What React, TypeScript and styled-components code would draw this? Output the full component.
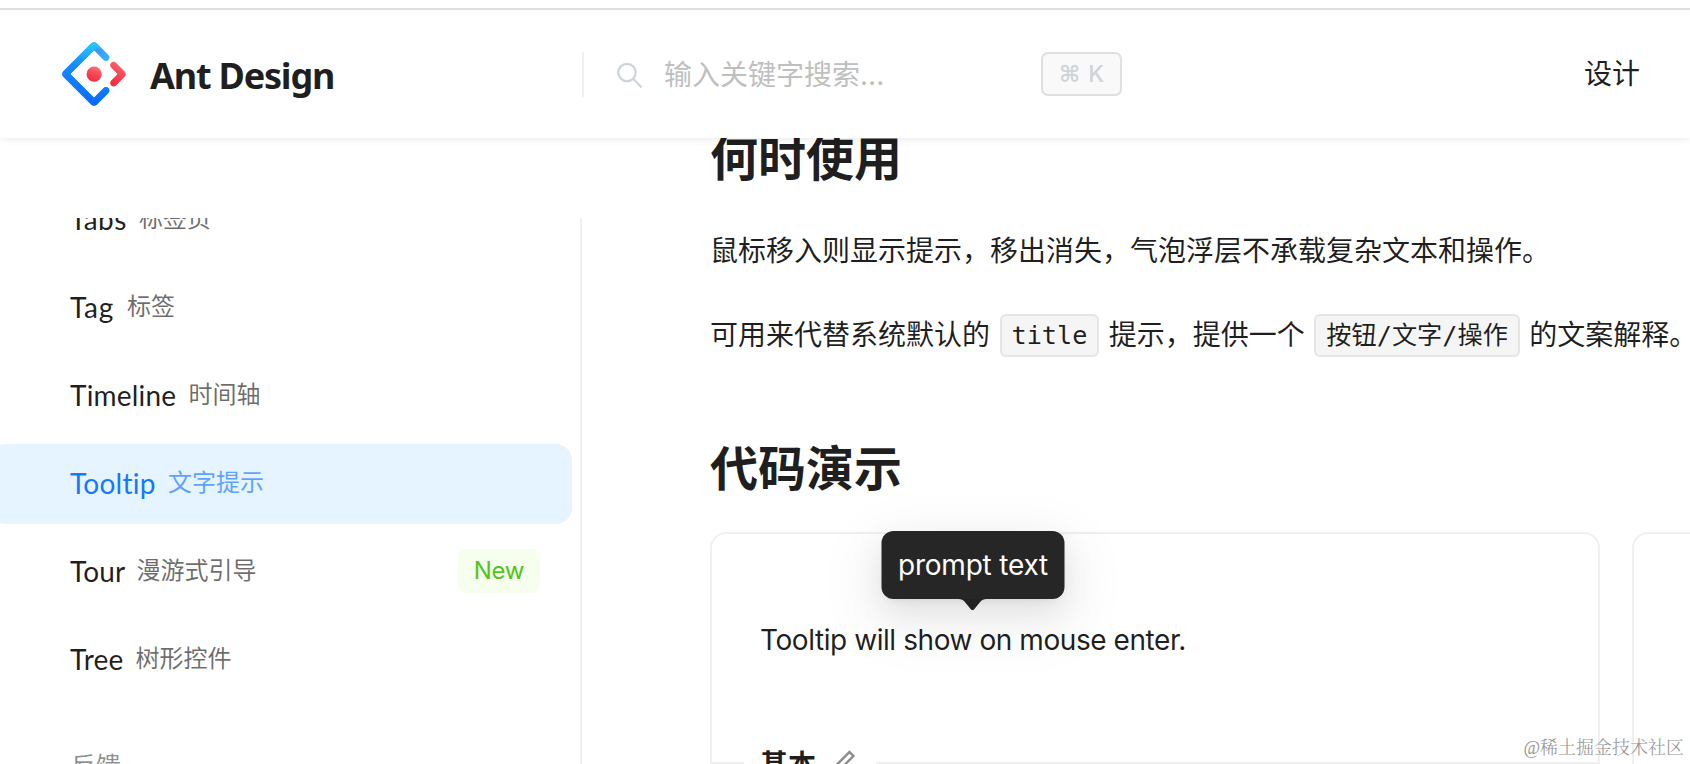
import React from 'react';
import styled, { createGlobalStyle } from 'styled-components';
import { AiOutlineEdit } from 'react-icons/ai';

const GlobalStyle = createGlobalStyle`
  * { box-sizing: border-box; }
  html, body { margin: 0; background: #fff; overflow: hidden; }
  body {
    font-family: Inter, 'Noto Sans CJK SC', sans-serif;
    font-size: 28px;
    color: rgba(0, 0, 0, 0.88);
  }
`;

const Page = styled.div`
  position: relative;
  display: flex;
  flex-direction: column;
  width: 1690px;
  height: 764px;
  overflow: hidden;
  background: #fff;
`;

const TopStrip = styled.div`
  flex: none;
  height: 10px;
  border-bottom: 2px solid #e0e0e0;
`;

const Header = styled.header`
  position: relative;
  z-index: 2;
  flex: none;
  display: flex;
  align-items: center;
  height: 128px;
  background: #fff;
  box-shadow: 0 2px 4px rgba(0, 0, 0, 0.03), 0 2px 12px -2px rgba(0, 0, 0, 0.03),
    0 4px 8px rgba(0, 0, 0, 0.02);
`;

const Brand = styled.a`
  display: flex;
  align-items: center;
  width: 582px;
  padding-left: 62px;
  gap: 24px;
`;

const BrandName = styled.span`
  font: 700 36px/48px 'Noto Sans', sans-serif;
  letter-spacing: -1.2px;
  white-space: nowrap;
  padding-top: 3px;
`;

const SearchBox = styled.div`
  display: flex;
  align-items: center;
  width: 540px;
  height: 45px;
  border-left: 2px solid #f0f0f0;
  padding-left: 32px;
`;

const SearchHint = styled.span`
  flex: 1;
  padding: 2px 0 0 21px;
  line-height: 44px;
  color: #bfbfbf;
`;

const Shortcut = styled.kbd`
  display: flex;
  align-items: center;
  justify-content: center;
  gap: 8px;
  width: 81px;
  height: 44px;
  border: 2px solid #dfdfdf;
  border-radius: 7px;
  background: #f9f9f9;
  color: #ced4d9;
  font: 500 23px/42px Inter, sans-serif;
`;

const CommandGlyph = styled.span`
  font: 700 23px/42px 'DejaVu Sans', sans-serif;
`;

const NavLink = styled.a`
  margin-left: auto;
  padding-right: 50px;
  line-height: 44px;
`;

const Body = styled.div`
  flex: 1;
  display: flex;
  min-height: 0;
`;

const Sidebar = styled.aside`
  width: 582px;
  margin-top: 80px;
  border-right: 2px solid #f0f0f0;
  overflow: hidden;
`;

const Menu = styled.nav`
  display: flex;
  flex-direction: column;
  gap: 8px;
  margin: -38px 8px 0 -10px;
`;

const MenuItem = styled.a<{ $active?: boolean }>`
  display: flex;
  align-items: center;
  height: 80px;
  padding: 0 32px 2px 80px;
  border-radius: 16px;
  background: ${(p) => (p.$active ? '#e6f4ff' : 'transparent')};
  color: ${(p) => (p.$active ? '#1677ff' : 'rgba(0, 0, 0, 0.88)')};
`;

const ItemName = styled.span<{ $width: number; $spacing: number }>`
  width: ${(p) => p.$width}px;
  font: 28px/78px Lato, sans-serif;
  font-variant-ligatures: none;
  letter-spacing: ${(p) => p.$spacing}px;
  white-space: nowrap;
`;

const ItemSubtitle = styled.span`
  margin-left: 12px;
  font-size: 24px;
  line-height: 76px;
  opacity: 0.65;
`;

const NewTag = styled.span`
  margin-left: auto;
  width: 82px;
  height: 44px;
  border-radius: 8px;
  background: #f6ffed;
  color: #52c41a;
  font-size: 24px;
  line-height: 44px;
  text-align: center;
  letter-spacing: -0.3px;
`;

const GroupTitle = styled.div`
  padding: 36px 0 0 81px;
  font-size: 25px;
  line-height: 44px;
  color: rgba(0, 0, 0, 0.45);
`;

const Main = styled.main`
  flex: 1;
  min-width: 0;
  padding-left: 128px;
`;

const Heading = styled.h2<{ $top: number }>`
  margin: ${(p) => p.$top}px 0 0;
  font-size: 48px;
  font-weight: 600;
  line-height: 64px;
`;

const Paragraph = styled.p<{ $top: number }>`
  margin: ${(p) => p.$top}px 0 0;
  height: 56px;
  line-height: 56px;
  white-space: nowrap;
`;

const Code = styled.code`
  display: inline-block;
  margin: -4px 9.5px 0;
  padding: 0 10px;
  height: 43px;
  border: 2px solid #e6e6e6;
  border-radius: 6px;
  background: #f5f5f5;
  font: 25.2px/39px 'DejaVu Sans Mono', 'Noto Sans CJK SC', monospace;
  vertical-align: middle;
`;

const Cards = styled.div`
  display: flex;
  gap: 32px;
  margin-top: 31px;
`;

const Card = styled.section`
  flex: none;
  width: 890px;
  border: 2px solid #f0f0f0;
  border-radius: 16px;
  height: 400px;
`;

const Demo = styled.div`
  height: 228px;
  padding: 84px 48px 0;
  line-height: 44px;
`;

const DemoTarget = styled.span`
  position: relative;
  display: inline-block;
  white-space: nowrap;
  letter-spacing: -0.43px;
`;

const Tooltip = styled.div`
  position: absolute;
  left: 50%;
  bottom: 63px;
  transform: translateX(-50%);
  width: 183px;
  height: 68px;
  border-radius: 12px;
  background: #262626;
  color: #fff;
  line-height: 68px;
  text-align: center;
  letter-spacing: -0.2px;
  box-shadow: 0 12px 32px rgba(0, 0, 0, 0.08), 0 6px 12px -8px rgba(0, 0, 0, 0.12),
    0 18px 56px 16px rgba(0, 0, 0, 0.05);
`;

const Arrow = styled.svg`
  position: absolute;
  left: 77px;
  top: 68px;
`;

const DemoDivider = styled.div`
  display: flex;
  align-items: center;
  height: 44px;
  margin-top: -21px;
  &::before { content: ''; width: 32px; height: 2px; background: #f0f0f0; }
  &::after { content: ''; flex: 1; height: 2px; background: #f0f0f0; }
`;

const DemoTitle = styled.div`
  display: flex;
  align-items: center;
  width: 132px;
  padding-left: 16px;
  gap: 12px;
  font-weight: 600;
  line-height: 44px;
  svg { color: rgba(0, 0, 0, 0.45); }
`;

const DemoName = styled.span`
  padding-top: 4px;
`;

const Watermark = styled.div`
  position: absolute;
  right: 6px;
  bottom: 3px;
  font: 300 18px/26px 'Liberation Serif', 'Noto Serif CJK SC', 'Noto Sans CJK SC', serif;
  color: #949494;
`;

const Logo = () => (
  <svg width="64" height="64" viewBox="0 0 200 200">
    <defs>
      <linearGradient id="tip" x1="62.1%" y1="0%" x2="108.2%" y2="37.86%">
        <stop stopColor="#4285EB" offset="0%" />
        <stop stopColor="#2EC7FF" offset="100%" />
      </linearGradient>
      <linearGradient id="blue" x1="69.64%" y1="0%" x2="54.04%" y2="108.46%">
        <stop stopColor="#29CDFF" offset="0%" />
        <stop stopColor="#148EFF" offset="37.86%" />
        <stop stopColor="#0A60FF" offset="100%" />
      </linearGradient>
      <linearGradient id="red" x1="69.69%" y1="-12.97%" x2="16.72%" y2="117.39%">
        <stop stopColor="#FA816E" offset="0%" />
        <stop stopColor="#F74A5C" offset="41.47%" />
        <stop stopColor="#F51D2C" offset="100%" />
      </linearGradient>
    </defs>
    <path
      fill="url(#tip)"
      d="M91.588 4.177L4.18 91.513c-4.699 4.695-4.699 12.279 0 16.974l87.408 87.336c4.7 4.696 12.29 4.696 16.989 0l36.648-36.618c4.209-4.205 4.209-11.023 0-15.228-4.208-4.205-11.031-4.205-15.24 0l-27.783 27.76c-1.17 1.17-2.945 1.17-4.114 0L28.286 101.993c-1.17-1.169-1.17-2.942 0-4.111l69.802-69.744c1.169-1.169 2.944-1.169 4.114 0l27.783 27.76c4.209 4.205 11.032 4.205 15.24 0 4.209-4.205 4.209-11.022 0-15.227L108.581 4.056c-4.719-4.594-12.312-4.557-16.993.12z"
    />
    <path
      fill="url(#blue)"
      d="M91.588 4.177L4.18 91.513c-4.699 4.695-4.699 12.279 0 16.974l87.408 87.336c4.7 4.696 12.29 4.696 16.989 0l36.648-36.618c4.209-4.205 4.209-11.023 0-15.228-4.208-4.205-11.031-4.205-15.24 0l-27.783 27.76c-1.17 1.17-2.945 1.17-4.114 0L28.286 101.993c-1.17-1.169-1.17-2.942 0-4.111l69.802-69.744c2.912-2.511 7.664-7.596 14.642-8.786 5.186-.883 10.855 1.062 17.009 5.837L108.581 4.056c-4.719-4.594-12.312-4.557-16.993.12z"
    />
    <path
      fill="url(#red)"
      d="M153.686 135.855c4.208 4.205 11.031 4.205 15.24 0l27.034-27.012c4.7-4.696 4.7-12.28 0-16.974l-27.27-27.151c-4.218-4.2-11.043-4.194-15.254.014-4.209 4.205-4.209 11.022 0 15.227l18.418 18.403c1.17 1.169 1.17 2.943 0 4.111l-18.168 18.154c-4.209 4.205-4.209 11.023 0 15.228z"
    />
    <ellipse fill="url(#red)" cx="100.52" cy="100.44" rx="23.6" ry="23.58" />
  </svg>
);

const SearchIcon = () => (
  <svg width="27" height="27" viewBox="0 0 27 27" fill="none" stroke="#ced4d9" strokeWidth="2.2">
    <circle cx="11" cy="11.500" r="8.700" />
    <path d="M17.100 17.600L25.500 26.500" />
  </svg>
);

const menu = [
  { name: 'Tabs', sub: '标签页', width: 57, spacing: 0.4 },
  { name: 'Tag', sub: '标签', width: 45, spacing: 0.7 },
  { name: 'Timeline', sub: '时间轴', width: 106.5, spacing: 0.2 },
  { name: 'Tooltip', sub: '文字提示', width: 86, spacing: 0.25 },
  { name: 'Tour', sub: '漫游式引导', width: 54.5, spacing: 0.1, isNew: true },
  { name: 'Tree', sub: '树形控件', width: 53.5, spacing: 0.2 },
];

export default function App() {
  return (
    <Page>
      <GlobalStyle />
      <TopStrip />
      <Header>
        <Brand>
          <Logo />
          <BrandName>Ant Design</BrandName>
        </Brand>
        <SearchBox>
          <SearchIcon />
          <SearchHint>输入关键字搜索...</SearchHint>
          <Shortcut>
            <CommandGlyph>⌘</CommandGlyph>
            <span>K</span>
          </Shortcut>
        </SearchBox>
        <NavLink>设计</NavLink>
      </Header>
      <Body>
        <Sidebar>
          <Menu>
            {menu.map((m) => (
              <MenuItem key={m.name} $active={m.name === 'Tooltip'}>
                <ItemName $width={m.width} $spacing={m.spacing}>{m.name}</ItemName>
                <ItemSubtitle>{m.sub}</ItemSubtitle>
                {m.isNew && <NewTag>New</NewTag>}
              </MenuItem>
            ))}
            <GroupTitle>反馈</GroupTitle>
          </Menu>
        </Sidebar>
        <Main>
          <Heading $top={-11}>何时使用</Heading>
          <Paragraph $top={32}>鼠标移入则显示提示，移出消失，气泡浮层不承载复杂文本和操作。</Paragraph>
          <Paragraph $top={28}>
            可用来代替系统默认的
            <Code>title</Code>
            提示，提供一个
            <Code>按钮/文字/操作</Code>
            的文案解释。
          </Paragraph>
          <Heading $top={74}>代码演示</Heading>
          <Cards>
            <Card>
              <Demo>
                <DemoTarget>
                  Tooltip will show on mouse enter.
                  <Tooltip>
                    prompt text
                    <Arrow width="28" height="12" viewBox="0 0 28 12">
                      <path
                        fill="#222"
                        d="M0 0C3 0 4.500 1 6 2.500L12.300 10.200Q14 12 15.700 10.200L22 2.500C23.500 1 25 0 28 0Z"
                      />
                    </Arrow>
                  </Tooltip>
                </DemoTarget>
              </Demo>
              <DemoDivider>
                <DemoTitle>
                  <DemoName>基本</DemoName>
                  <AiOutlineEdit size={32} />
                </DemoTitle>
              </DemoDivider>
            </Card>
            <Card />
          </Cards>
        </Main>
      </Body>
      <Watermark>@稀土掘金技术社区</Watermark>
    </Page>
  );
}
